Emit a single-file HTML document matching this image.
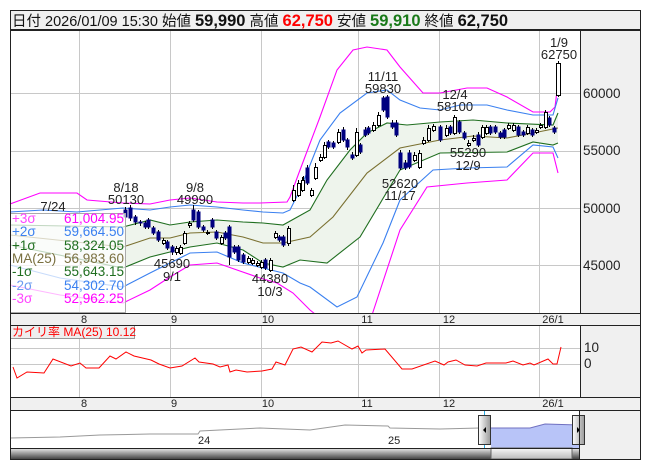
<!DOCTYPE html>
<html><head><meta charset="utf-8"><style>
body{margin:0;background:#fff;width:653px;height:470px;overflow:hidden}
svg{display:block;font-family:"Liberation Sans","Noto Sans CJK JP",sans-serif}
</style></head><body>
<svg width="653" height="470" viewBox="0 0 653 470">
<defs>
<linearGradient id="sb" x1="0" y1="0" x2="0" y2="1"><stop offset="0" stop-color="#eee"/><stop offset="1" stop-color="#444"/></linearGradient>
<linearGradient id="th" x1="0" y1="0" x2="0" y2="1"><stop offset="0" stop-color="#fafafa"/><stop offset="1" stop-color="#bbb"/></linearGradient>
<linearGradient id="hd" x1="0" y1="0" x2="1" y2="0"><stop offset="0" stop-color="#fff"/><stop offset="1" stop-color="#999"/></linearGradient>
</defs>
<!-- header -->
<rect x="10.5" y="10.5" width="630" height="19" fill="#f0f0f0" stroke="#222"/>
<text x="12" y="26" font-size="14.5" fill="#111">日付 2026/01/09 15:30 始値 <tspan font-weight="bold" font-size="16.5">59,990</tspan>  高値 <tspan font-weight="bold" font-size="16.5" fill="#f00">62,750</tspan>  安値 <tspan font-weight="bold" font-size="16.5" fill="#1a7a1a">59,910</tspan>  終値 <tspan font-weight="bold" font-size="16.5">62,750</tspan></text>
<!-- right panels -->
<rect x="580" y="30" width="60" height="430" fill="#f0f0f0"/>
<!-- main grid -->
<g stroke="#c8c8c8" stroke-width="1">
<path d="M79.5 30V313M170.5 30V313M261.5 30V313M358.5 30V313M439.5 30V313M539.5 30V313"/>
<path d="M10 93.5H580M10 151.5H580M10 208.5H580M10 265.5H580"/>
<path d="M79.5 325V397M170.5 325V397M261.5 325V397M358.5 325V397M439.5 325V397M539.5 325V397"/>
<path d="M10 348.5H580M10 364.5H580"/>
</g>
<!-- band fill -->
<path fill="#eef4ec" d="M10,225 123,227 150,220 170,225 190,222 217,220 243,222 263,223 283,225 310,210 327,180 350,150 367,133 387,123 407,125 440,122 473,120 507,123 553,125 558,113 L558,143 553,145 533,142 507,152 440,153 400,170 360,237 327,263 300,260 283,267 263,263 243,250 217,243 190,247 170,252 150,257 123,268 10,245Z"/>
<g fill="none" stroke-width="1.1">
<polyline stroke="#ff00ff" points="10,204 40,193 77,193 87,200 123,203 150,204 170,200 190,198 217,202 243,203 260,203 287,202 290,197 300,170 320,117 337,70 353,50 367,47 387,50 400,67 423,93 440,93 467,88 487,88 507,97 533,112 550,112 555,107 558,83"/>
<polyline stroke="#ff00ff" points="10,285 60,295 123,303 150,290 170,277 190,265 217,263 237,270 260,278 277,283 293,293 310,310 315,314"/>
<polyline stroke="#ff00ff" points="372,315 400,230 427,187 467,183 507,180 533,153 553,153 558,173"/>
<polyline stroke="#3a80f0" points="10,212 43,210 77,212 123,208 150,210 170,207 190,205 217,207 243,210 263,212 283,213 290,210 300,190 320,140 340,113 367,93 387,90 400,100 420,108 440,110 460,105 487,105 507,110 533,115 553,115 558,98"/>
<polyline stroke="#3a80f0" points="10,265 60,278 123,287 150,273 170,263 190,253 217,252 243,263 263,268 283,273 300,283 310,287 337,307 357,297 383,243 400,200 433,170 467,168 507,167 533,145 553,147 558,158"/>
<polyline stroke="#1f6e1f" points="10,225 123,227 150,220 170,225 190,222 217,220 243,222 263,223 283,225 310,210 327,180 350,150 367,133 387,123 407,125 440,122 473,120 507,123 553,125 558,113"/>
<polyline stroke="#1f6e1f" points="10,245 123,268 150,257 170,252 190,247 217,243 243,250 263,263 283,267 300,260 327,263 360,237 400,170 440,153 507,152 533,142 553,145 558,143"/>
<polyline stroke="#7a7030" points="10,235 123,247 150,238 170,238 190,233 217,232 243,237 263,243 283,243 310,237 333,217 367,173 400,148 440,140 473,136 507,138 533,133 558,128"/>
</g>
<!-- candles -->
<g stroke="#000" stroke-width="1">
<path d="M125.5 207V220M130.5 205V221M135.5 215V225M140.5 220V226M145.5 221V229M148.5 218V229M153.5 226V235M158.5 230V242M163.5 238V245M167.5 240V250M172.5 245V255M176.5 246V255M180.5 245V255M184.5 231V245M189.5 221V228M193.5 205V222M198.5 210V229M203.5 225V232M207.5 230V235M212.5 218V229M216.5 230V240M221.5 235V245M225.5 231V240M229.5 225V265M234.5 245V254M238.5 245V262M243.5 253V264M248.5 256V264M252.5 258V265M257.5 261V267M261.5 260V269M265.5 258V270M270.5 258V272M275.5 231V239M279.5 235V242M283.5 235V247M288.5 226V246M293.5 185V202M298.5 180V197M303.5 176V190M307.5 165V185M302.5 177V192M311.5 188V197M315.5 163V180M320.5 154V162M324.5 142V159M328.5 140V149M333.5 141V149M338.5 129V144M343.5 127V142M347.5 138V150M352.5 152V160M356.5 128V157M360.5 143V154M365.5 127V137M368.5 126V135M373.5 122V132M378.5 112V127M383.5 96V112M387.5 95V119M392.5 120V129M396.5 120V137M400.5 150V170M405.5 160V170M409.5 150V169M414.5 152V162M419.5 150V169M423.5 137V145M428.5 125V142M433.5 124V132M440.5 125V142M446.5 125V137M450.5 125V135M454.5 115V135M459.5 120V134M464.5 131V140M468.5 140V147M473.5 135V142M478.5 132V147M482.5 125V139M486.5 125V135M490.5 125V135M495.5 125V134M500.5 131V139M504.5 128V139M508.5 123V130M513.5 123V132M518.5 125V137M523.5 130V137M527.5 125V135M532.5 128V137M536.5 128V134M540.5 123V129M545.5 110V129M549.5 116V127M554.5 126V134M558.5 61V97"/>
</g>
<g fill="#000080" stroke="#000080">
<path d="M124 210h3v7h-3zM129 208h3v10h-3zM134 217h3v5h-3zM139 222h3v1h-3zM144 223h3v4h-3zM147 220h3v7h-3zM152 228h3v5h-3zM157 232h3v8h-3zM166 242h3v6h-3zM171 247h3v5h-3zM192 210h3v10h-3zM197 212h3v15h-3zM202 227h3v3h-3zM211 220h3v7h-3zM215 232h3v6h-3zM224 233h3v5h-3zM228 227h3v30h-3zM233 247h3v5h-3zM237 247h3v13h-3zM242 255h3v7h-3zM264 260h3v8h-3zM278 237h3v3h-3zM282 237h3v8h-3zM306 168h3v15h-3zM327 142h3v5h-3zM332 143h3v4h-3zM342 130h3v10h-3zM346 140h3v7h-3zM351 155h3v3h-3zM359 145h3v7h-3zM364 130h3v5h-3zM367 128h3v5h-3zM382 98h3v12h-3zM386 97h3v20h-3zM391 123h3v4h-3zM395 123h3v12h-3zM399 153h3v15h-3zM404 163h3v5h-3zM408 153h3v14h-3zM439 127h3v13h-3zM449 127h3v6h-3zM458 122h3v10h-3zM463 133h3v5h-3zM477 135h3v10h-3zM489 127h3v6h-3zM494 127h3v5h-3zM499 133h3v4h-3zM503 130h3v7h-3zM517 127h3v8h-3zM522 132h3v3h-3zM531 130h3v5h-3zM548 118h3v7h-3zM553 128h3v4h-3z"/>
</g>
<g fill="#fff" stroke="#000">
<path d="M162.5 240.5h3v3h-3zM175.5 248.5h3v4h-3zM179.5 247.5h3v6h-3zM183.5 233.5h3v10h-3zM188.5 223.5h3v2h-3zM206.5 232.5h3v1h-3zM220.5 237.5h3v6h-3zM247.5 258.5h3v4h-3zM251.5 260.5h3v3h-3zM256.5 263.5h3v2h-3zM260.5 262.5h3v5h-3zM269.5 260.5h3v10h-3zM274.5 233.5h3v4h-3zM287.5 228.5h3v15h-3zM292.5 190.5h3v10h-3zM297.5 183.5h3v12h-3zM301.5 180.5h3v10h-3zM310.5 190.5h3v5h-3zM314.5 167.5h3v11h-3zM319.5 157.5h3v3h-3zM323.5 145.5h3v12h-3zM337.5 132.5h3v10h-3zM355.5 132.5h3v23h-3zM372.5 125.5h3v5h-3zM377.5 115.5h3v10h-3zM413.5 155.5h3v5h-3zM418.5 153.5h3v14h-3zM422.5 140.5h3v3h-3zM427.5 128.5h3v12h-3zM432.5 126.5h3v4h-3zM445.5 128.5h3v7h-3zM453.5 117.5h3v16h-3zM467.5 143.5h3v2h-3zM472.5 138.5h3v2h-3zM481.5 127.5h3v10h-3zM485.5 127.5h3v6h-3zM507.5 125.5h3v3h-3zM512.5 125.5h3v5h-3zM526.5 127.5h3v6h-3zM535.5 130.5h3v2h-3zM539.5 125.5h3v2h-3zM544.5 112.5h3v15h-3zM556.5 63.5h4v32h-4z"/>
</g>
<!-- annotations -->
<g font-size="13" fill="#222" text-anchor="middle">
<text x="53" y="211">7/24</text>
<text x="126" y="192">8/18</text><text x="126" y="204">50130</text>
<text x="195" y="192">9/8</text><text x="195" y="204">49990</text>
<text x="172" y="268">45690</text><text x="172" y="281">9/1</text>
<text x="270" y="283">44380</text><text x="270" y="296">10/3</text>
<text x="383" y="81">11/11</text><text x="383" y="93">59830</text>
<text x="455" y="99">12/4</text><text x="455" y="111">58100</text>
<text x="468" y="157">55290</text><text x="468" y="170">12/9</text>
<text x="400" y="188">52620</text><text x="400" y="200">11/17</text>
<text x="559" y="47">1/9</text><text x="559" y="59">62750</text>
</g>
<!-- legend -->
<rect x="10.5" y="213.5" width="115" height="99" fill="#fff" fill-opacity="0.72" stroke="#aaa"/>
<g font-size="13.5">
<text x="12" y="223" fill="#ff44ff">+3σ</text><text x="124" y="223" fill="#ff00ff" text-anchor="end">61,004.95</text>
<text x="12" y="236" fill="#3a80f0">+2σ</text><text x="124" y="236" fill="#3a80f0" text-anchor="end">59,664.50</text>
<text x="12" y="250" fill="#1f6e1f">+1σ</text><text x="124" y="250" fill="#1f6e1f" text-anchor="end">58,324.05</text>
<text x="12" y="263" fill="#7a7040">MA(25)</text><text x="124" y="263" fill="#7a7040" text-anchor="end">56,983.60</text>
<text x="12" y="276" fill="#1f6e1f">-1σ</text><text x="124" y="276" fill="#1f6e1f" text-anchor="end">55,643.15</text>
<text x="12" y="290" fill="#6a9af0">-2σ</text><text x="124" y="290" fill="#3a80f0" text-anchor="end">54,302.70</text>
<text x="12" y="303" fill="#ff44ff">-3σ</text><text x="124" y="303" fill="#ff00ff" text-anchor="end">52,962.25</text>
</g>
<!-- price axis labels -->
<g font-size="13.5" fill="#222">
<text x="583" y="98">60000</text><text x="583" y="155">55000</text><text x="583" y="213">50000</text><text x="583" y="270">45000</text>
<text x="584" y="352">10</text><text x="584" y="368">0</text>
</g>
<!-- axis strips -->
<rect x="10" y="313" width="630" height="12" fill="#f0f0f0"/>
<rect x="10" y="397" width="630" height="13" fill="#f0f0f0"/>
<g font-size="11" fill="#222" text-anchor="middle">
<text x="84" y="323">8</text><text x="174" y="323">9</text><text x="268" y="323">10</text><text x="367" y="323">11</text><text x="449" y="323">12</text><text x="553" y="323">26/1</text>
<text x="84" y="407">8</text><text x="174" y="407">9</text><text x="268" y="407">10</text><text x="367" y="407">11</text><text x="449" y="407">12</text><text x="553" y="407">26/1</text>
</g>
<!-- oscillator -->
<polyline fill="none" stroke="#f00" stroke-width="1" points="13,367 17,378 27,372 44,373 53,359 71,366 80,363 86,368 99,368 110,356 116,359 126,352 134,356 151,360 159,364 170,368 182,366 195,358 199,362 213,364 220,367 228,365 230,372 236,370 247,372 262,371 272,369 276,362 285,365 293,349 301,347 312,352 322,342 331,343 338,341 352,349 358,346 362,353 366,350 385,349 402,369 412,369 435,361 444,365 448,362 456,360 465,365 477,366 486,363 506,363 513,361 523,365 530,363 534,365 548,359 553,364 557,364 561,347"/>
<rect x="10.5" y="325.5" width="124" height="13" fill="#eee" stroke="#999"/>
<text x="12" y="336" font-size="12" fill="#f00">カイリ率 MA(25)  10.12</text>
<!-- navigator -->
<rect x="10" y="410" width="570" height="38" fill="#fff"/>
<path d="M491,428 530,428 545,424 579,425 579,448 491,448Z" fill="#b8c4f8"/>
<polyline fill="none" stroke="#999" stroke-width="1" points="10,438 60,437 100,435 150,434 198,434 200,431 260,428 310,430 345,425 388,426 390,428 440,429 480,428 491,428"/>
<polyline fill="none" stroke="#7070c0" stroke-width="1" points="491,428 530,428 545,424 579,425"/>
<text x="198" y="444" font-size="11" fill="#222">24</text><text x="388" y="444" font-size="11" fill="#222">25</text>
<path d="M484.5 410V448M579.5 410V448" stroke="#29a8e0"/>
<rect x="478.5" y="415.5" width="12" height="29" fill="url(#hd)" stroke="#333"/>
<rect x="572.5" y="415.5" width="12" height="29" fill="url(#hd)" stroke="#333"/>
<path d="M483 430l3-3v6z" fill="#000"/><path d="M577 427l3 3-3 3z" fill="#000"/>
<rect x="10" y="448" width="570" height="11" fill="url(#sb)"/>
<rect x="491" y="448" width="81" height="11" fill="url(#th)" stroke="#666"/>
<!-- borders -->
<g fill="none" stroke="#222">
<rect x="10.5" y="10.5" width="630" height="449"/>
<path d="M10 30.5H641M580.5 30V313M10 313.5H641M10 325.5H641M580.5 325V397M10 397.5H641M10 410.5H641M579.5 410V460M10 448.5H580"/>
</g>
</svg>
</body></html>
